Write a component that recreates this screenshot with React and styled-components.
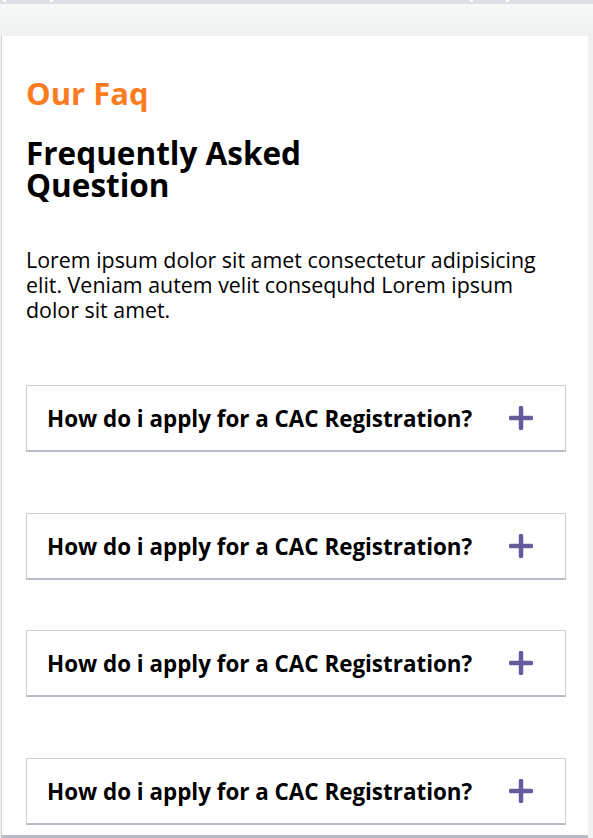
import React from 'react';
import styled, { createGlobalStyle } from 'styled-components';

const GlobalStyle = createGlobalStyle`
  html, body {
    margin: 0;
    padding: 0;
    background: #eff0f0;
  }
  body {
    font-family: "Open Sans", "Liberation Sans", sans-serif;
    color: #000;
  }
`;

const Page = styled.div`
  min-height: 838px;
  background: linear-gradient(#f7f8f8, #eff0f0 40px);
  padding-right: 5px;
  box-sizing: border-box;
  overflow: hidden;
`;

const TopBar = styled.div`
  height: 4px;
  background: #dcdfe4;
  margin-right: -5px;
  display: flex;
  align-items: flex-start;
  padding-left: 3px;
  margin-bottom: 32px;
`;

const Tick = styled.span`
  width: 3px;
  height: 2px;
  background: #fff;
  margin-left: ${p => p.$at}px;
`;

const Card = styled.section`
  background: #fff;
  margin-left: 1px;
  border-left: 1px solid #d4d4d4;
  padding: 37px 22px 0 24px;
  min-height: 802px;
  box-sizing: border-box;
  border-bottom: 3px solid #b6bcc9;
`;

const Eyebrow = styled.h3`
  margin: 0;
  color: #fd7c22;
  font-size: 31px;
  font-weight: 700;
  line-height: 40px;
`;

const Title = styled.h2`
  margin: 24px 0 0;
  font-size: 31.5px;
  font-weight: 700;
  line-height: 32px;
  max-width: 300px;
`;

const Intro = styled.p`
  margin: 46px 0 0;
  font-size: 21.4px;
  line-height: 25px;
  max-width: 530px;
`;

const List = styled.div`
  display: flex;
  flex-direction: column;
  margin-top: 63px;
`;

const Item = styled.div`
  margin-top: ${p => p.$gap}px;
  display: flex;
  align-items: center;
  justify-content: space-between;
  height: 67px;
  padding: 0 32px 0 20px;
  border: 1px solid #c9cdd6;
  border-bottom: 2px solid #b6bcc9;
  box-sizing: border-box;
`;

const Question = styled.span`
  font-size: 22.4px;
  font-weight: 700;
`;

const Plus = () => (
  <svg width="24" height="24" viewBox="0 0 24 24">
    <path d="M12 2v20M2 12h20" stroke="#645a9c" strokeWidth="4.5" strokeLinecap="round" />
  </svg>
);

const faqs = [
  { q: 'How do i apply for a CAC Registration?', gap: 0 },
  { q: 'How do i apply for a CAC Registration?', gap: 61 },
  { q: 'How do i apply for a CAC Registration?', gap: 50 },
  { q: 'How do i apply for a CAC Registration?', gap: 61 },
];

export default function App() {
  return (
    <>
      <GlobalStyle />
      <Page>
        <TopBar>
          <Tick $at={0} />
          <Tick $at={44} />
          <Tick $at={417} />
          <Tick $at={33} />
        </TopBar>
        <Card>
          <Eyebrow>Our Faq</Eyebrow>
          <Title>Frequently Asked Question</Title>
          <Intro>
            Lorem ipsum dolor sit amet consectetur adipisicing elit. Veniam autem velit consequhd Lorem ipsum dolor sit amet.
          </Intro>
          <List>
            {faqs.map((f, i) => (
              <Item key={i} $gap={f.gap}>
                <Question>{f.q}</Question>
                <Plus />
              </Item>
            ))}
          </List>
        </Card>
      </Page>
    </>
  );
}
